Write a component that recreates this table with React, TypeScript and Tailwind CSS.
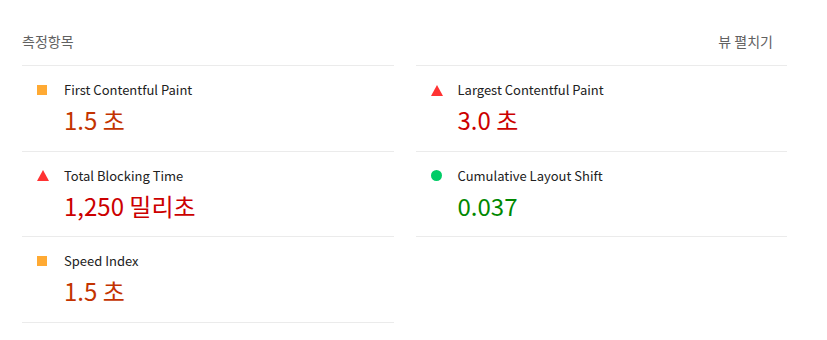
import React from "react";

type Rating = "pass" | "average" | "fail";

type Metric = {
  label: string;
  value: string;
  rating: Rating;
};

const leftMetrics: Metric[] = [
  { label: "First Contentful Paint", value: "1.5 초", rating: "average" },
  { label: "Total Blocking Time", value: "1,250 밀리초", rating: "fail" },
  { label: "Speed Index", value: "1.5 초", rating: "average" },
];

const rightMetrics: Metric[] = [
  { label: "Largest Contentful Paint", value: "3.0 초", rating: "fail" },
  { label: "Cumulative Layout Shift", value: "0.037", rating: "pass" },
];

const valueColor: Record<Rating, string> = {
  pass: "text-[#008800]",
  average: "text-[#c33300]",
  fail: "text-[#cc0000]",
};

const ScoreIcon = ({ rating }: { rating: Rating }) => {
  if (rating === "pass") {
    return <span className="block w-[11px] h-[11px] rounded-full bg-[#00cc66]" />;
  }
  if (rating === "average") {
    return <span className="block w-[10px] h-[10px] bg-[#ffaa33]" />;
  }
  return (
    <svg width="12" height="11" viewBox="0 0 12 11" className="block">
      <polygon points="6,0 12,11 0,11" fill="#ff3333" />
    </svg>
  );
};

const MetricRow = ({ metric }: { metric: Metric }) => (
  <div className="border-b border-[#ebebeb] h-[85.5px] pt-[14px]">
    <div className="flex items-center h-5">
      <div className="w-[42px] pl-[15px] flex items-center">
        <ScoreIcon rating={metric.rating} />
      </div>
      <span className="text-[13px] leading-5 text-[#212121]">{metric.label}</span>
    </div>
    <div className={`mt-1 pl-[42px] text-[24px] leading-8 ${valueColor[metric.rating]}`}>
      {metric.value}
    </div>
  </div>
);

const App = () => {
  return (
    <div
      className="w-[827px] h-[340px] bg-white px-[22px]"
      style={{ fontFamily: '"Noto Sans CJK KR", "Noto Sans", sans-serif' }}
    >
      <div className="w-[765px] grid grid-cols-2 gap-x-[22px]">
        {/* left column */}
        <div>
          <div className="h-[66px] pt-[31px] border-b border-[#ebebeb] flex items-start">
            <span className="text-[14px] leading-5 text-[#616161]">측정항목</span>
          </div>
          {leftMetrics.map(m => (
            <MetricRow key={m.label} metric={m} />
          ))}
        </div>

        {/* right column */}
        <div>
          <div className="h-[66px] pt-[31px] pr-[14px] border-b border-[#ebebeb] flex justify-end items-start">
            <span className="text-[14px] leading-5 text-[#616161]">뷰 펼치기</span>
          </div>
          {rightMetrics.map(m => (
            <MetricRow key={m.label} metric={m} />
          ))}
        </div>
      </div>
    </div>
  );
};

export default App;
